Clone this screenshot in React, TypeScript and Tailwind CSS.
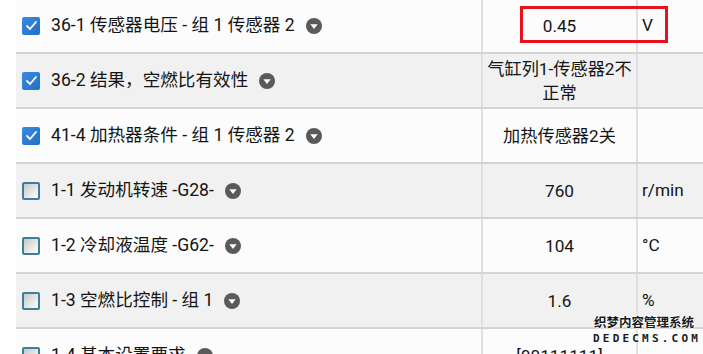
import React from 'react';

interface Row {
  checked: boolean;
  label: string;
  value: React.ReactNode;
  unit: string;
}

const rows: Row[] = [
  { checked: true, label: '36-1 传感器电压 - 组 1 传感器 2', value: '0.45', unit: 'V' },
  {
    checked: true,
    label: '36-2 结果，空燃比有效性',
    value: (
      <>
        气缸列1-传感器2不
        <br />
        正常
      </>
    ),
    unit: '',
  },
  { checked: true, label: '41-4 加热器条件 - 组 1 传感器 2', value: '加热传感器2关', unit: '' },
  { checked: false, label: '1-1 发动机转速 -G28-', value: '760', unit: 'r/min' },
  { checked: false, label: '1-2 冷却液温度 -G62-', value: '104', unit: '°C' },
  { checked: false, label: '1-3 空燃比控制 - 组 1', value: '1.6', unit: '%' },
  { checked: false, label: '1-4 基本设置要求', value: '[00111111]', unit: '' },
];

function Checkbox({ checked }: { checked: boolean }) {
  if (checked) {
    return (
      <div className="w-[18px] h-[18px] rounded-[2px] bg-gradient-to-br from-[#3a8ce0] to-[#1f6fc4] flex items-center justify-center shrink-0">
        <svg width="13" height="13" viewBox="0 0 13 13">
          <polyline points="2,7 5,10 11,3" fill="none" stroke="white" strokeWidth="1.8" strokeLinecap="round" strokeLinejoin="round" />
        </svg>
      </div>
    );
  }
  return (
    <div className="w-[18px] h-[18px] rounded-[2px] border-2 border-[#3d7e98] bg-gradient-to-br from-[#c8c8c8] to-[#ffffff] shrink-0" />
  );
}

function DropIcon() {
  return (
    <svg width="16" height="16" viewBox="0 0 16 16" className="shrink-0">
      <circle cx="8" cy="8" r="8" fill="#5a5a5a" />
      <polygon points="4.3,6.3 11.7,6.3 8,11" fill="white" />
    </svg>
  );
}

export default function App() {
  return (
    <div className="w-[703px] h-[354px] overflow-hidden bg-white relative font-['Roboto','Noto_Sans_CJK_SC',sans-serif] text-[#141414]">
      <div className="ml-4 -mt-px">
        {rows.map((row, i) => (
          <div
            key={i}
            className={`grid grid-cols-[465px_155px_1fr] h-[55px] border-b-2 border-[#d4d4d4] ${
              i % 2 === 1 ? 'bg-[#f1f1f1]' : 'bg-[#fcfcfc]'
            }`}
          >
            <div className="flex items-center pl-[6px]">
              <Checkbox checked={row.checked} />
              <span className="ml-[11px] text-[17.6px] whitespace-nowrap">{row.label}</span>
              <span className="ml-[11px] flex">
                <DropIcon />
              </span>
            </div>
            <div className="flex items-center justify-center text-center text-[17.2px] leading-[24px] border-l-2 border-[#e0e0e0]">
              <span>{row.value}</span>
            </div>
            <div className="flex items-center pl-[4px] text-[17.2px] border-l-2 border-[#e0e0e0]">
              {row.unit}
            </div>
          </div>
        ))}
      </div>

      {/* highlight box */}
      <div className="absolute left-[520px] top-[6px] w-[148px] h-[37px] border-[3px] border-[#e3141c]" />

      {/* watermark */}
      <div className="absolute left-[593px] top-[316px] w-[102px] text-center font-bold leading-none text-[#1a1a1a] [text-shadow:0_0_2px_#fff,0_0_2px_#fff,0_0_3px_#fff]">
        <div className="text-[12.5px] font-['Noto_Sans_CJK_SC',sans-serif]">织梦内容管理系统</div>
        <div className="mt-[4px] text-[11px] tracking-[3.2px] font-['DejaVu_Sans_Mono',monospace]">DEDECMS.COM</div>
      </div>
    </div>
  );
}
